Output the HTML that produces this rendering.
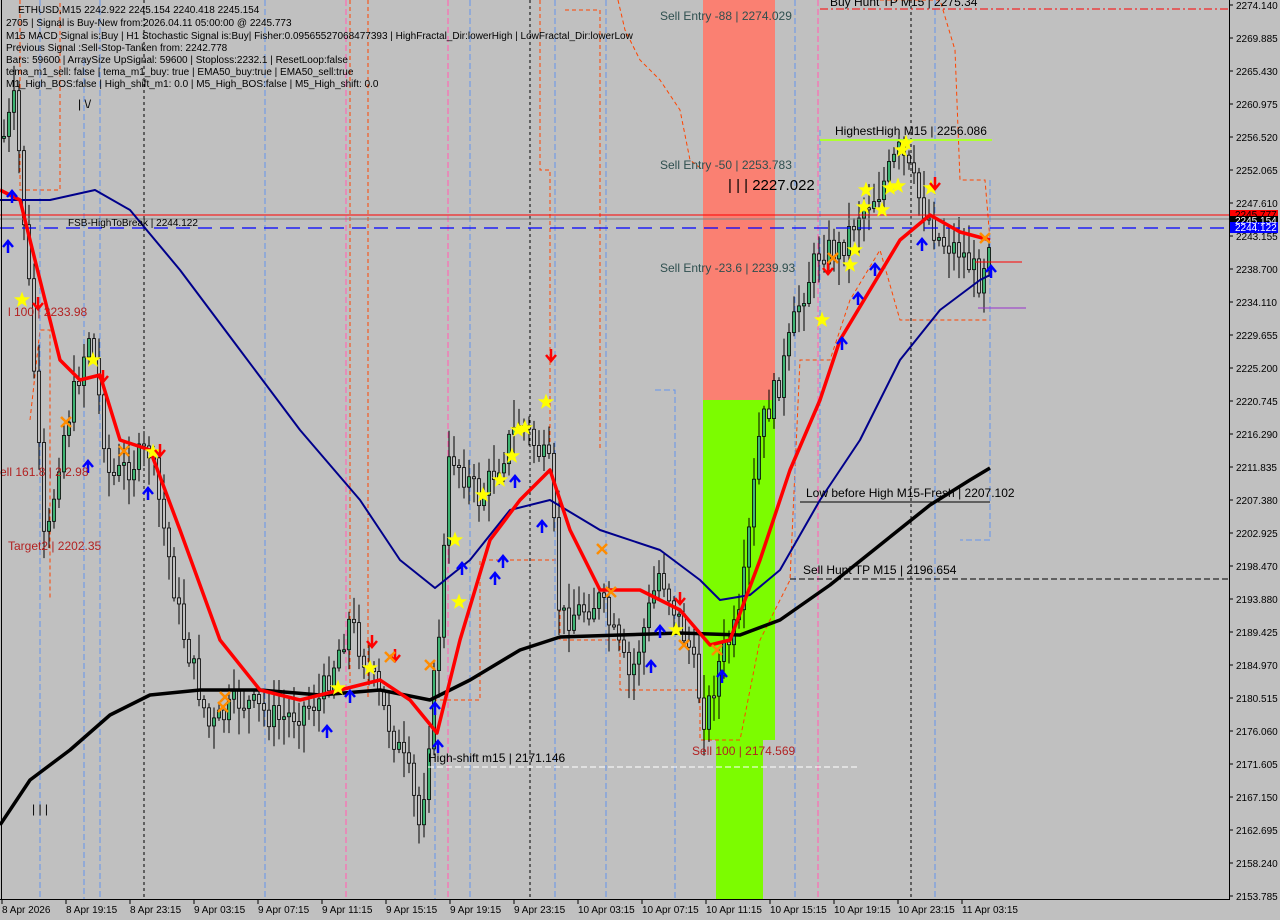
<!DOCTYPE html>
<html><head><meta charset="utf-8"><style>
html,body{margin:0;padding:0;background:#c0c0c0;width:1280px;height:920px;overflow:hidden}
svg{display:block;font-family:"Liberation Sans",Tahoma,sans-serif}
</style></head><body>
<svg id="s" width="1280" height="920" viewBox="0 0 1280 920" xmlns="http://www.w3.org/2000/svg">
<rect width="1280" height="920" fill="#c0c0c0"/>
<rect x="703" y="0" width="72" height="400" fill="#fa8072"/>
<rect x="703" y="400" width="72" height="340" fill="#7cfc00"/>
<rect x="716" y="740" width="47" height="160" fill="#7cfc00"/>
<g id="orange" fill="none" stroke="#ff4500" stroke-width="1" stroke-dasharray="4,3">
<polyline points="618,0 625,30 640,60 660,80 680,110 690,160 703,170"/>
<polyline points="350,0 350,700"/><polyline points="368,0 368,700"/>
<polyline points="20,0 20,190 60,190 60,0"/>
<polyline points="540,0 540,170 550,170 550,450"/>
<polyline points="565,10 600,10 600,450"/>
<polyline points="880,0 940,0 955,50 960,180 985,180 990,240"/>
<polyline points="433,700 480,700 480,560 560,560 560,640 620,640 620,690 700,690 700,740 740,740 760,640 790,580 800,360 830,360 850,300 880,250 900,320 990,320"/>
<polyline points="30,420 40,330 50,330 50,600"/>
</g>
<g fill="none" stroke="#6495ed" stroke-width="1" stroke-dasharray="6,3">
<polyline points="100,0 100,900"/><polyline points="40,0 40,900"/><polyline points="84,60 84,900"/>
<polyline points="470,0 470,900"/><polyline points="655,390 675,390 675,900"/>
<polyline points="795,0 795,900"/><polyline points="820,130 820,480"/>
<polyline points="935,0 935,900"/><polyline points="990,180 990,540 960,540"/>
<polyline points="606,0 606,900"/><polyline points="555,0 555,900"/>
<polyline points="435,700 435,900"/><polyline points="265,0 265,900"/>
</g>
<g stroke="#ff69b4" stroke-width="1.2" stroke-dasharray="6,3"><line x1="346" y1="0" x2="346" y2="900"/><line x1="448" y1="0" x2="448" y2="900"/><line x1="818" y1="0" x2="818" y2="900"/></g>
<g stroke="#000" stroke-width="1" stroke-dasharray="3,3"><line x1="144" y1="0" x2="144" y2="900"/><line x1="911" y1="0" x2="911" y2="900"/><line x1="530" y1="0" x2="530" y2="900"/></g>
<g id="candles"></g>
<line x1="0" y1="215" x2="1229" y2="215" stroke="#ff0000" stroke-width="1"/>
<line x1="0" y1="219" x2="1229" y2="219" stroke="#808080" stroke-width="1"/>
<line x1="0" y1="228" x2="1229" y2="228" stroke="#0000ff" stroke-width="1.2" stroke-dasharray="14,8"/>
<line x1="820" y1="9" x2="1229" y2="9" stroke="#ff0000" stroke-dasharray="8,3,2,3"/>
<line x1="820" y1="140" x2="992" y2="140" stroke="#adff2f" stroke-width="2"/>
<line x1="800" y1="502" x2="990" y2="502" stroke="#000"/>
<line x1="790" y1="579" x2="1229" y2="579" stroke="#000" stroke-dasharray="6,3"/>
<line x1="428" y1="767" x2="860" y2="767" stroke="#fff" stroke-dasharray="6,3"/>
<line x1="975" y1="262" x2="1022" y2="262" stroke="#ff0000"/>
<line x1="978" y1="308" x2="1026" y2="308" stroke="#9932cc"/>
<polyline fill="none" stroke="#000" stroke-width="3.5" stroke-linejoin="round" points="0,825 30,780 70,750 110,715 150,695 200,690 260,690 320,695 380,690 430,700 470,680 520,650 560,637 620,635 680,633 740,635 780,620 830,585 880,545 930,505 970,480 990,468"/>
<polyline fill="none" stroke="#00008b" stroke-width="2" stroke-linejoin="round" points="0,200 50,200 95,190 130,210 180,270 240,350 300,430 360,500 400,560 435,588 470,560 510,510 550,500 600,530 660,550 700,580 720,600 750,595 780,570 820,500 860,440 900,360 940,310 980,280 990,275"/>
<polyline fill="none" stroke="#ff0000" stroke-width="3.5" stroke-linejoin="round" points="0,190 20,200 40,280 60,360 80,380 100,375 120,440 150,450 180,530 220,640 260,690 300,700 340,690 380,680 410,700 437,733 460,640 490,540 520,500 550,470 570,530 600,590 640,590 680,610 710,645 730,640 760,560 790,470 820,400 840,340 870,290 900,240 930,215 960,232 990,240"/>
<g id="marks"></g>
<g font-size="10" fill="#000">
<text x="18" y="13">ETHUSD,M15  2242.922 2245.154 2240.418 2245.154</text>
<text x="6" y="26">2705 | Signal is Buy-New from:2026.04.11 05:00:00 @ 2245.773</text>
<text x="6" y="39">M15 MACD Signal is:Buy | H1 Stochastic Signal is:Buy| Fisher:0.09565527068477393 | HighFractal_Dir:lowerHigh | LowFractal_Dir:lowerLow</text>
<text x="6" y="51">Previous Signal :Sell-Stop-Tanken from: 2242.778</text>
<text x="6" y="63">Bars: 59600 | ArraySize UpSignal: 59600 | Stoploss:2232.1 | ResetLoop:false</text>
<text x="6" y="75">tema_m1_sell: false | tema_m1_buy: true | EMA50_buy:true | EMA50_sell:true</text>
<text x="6" y="87">M1_High_BOS:false | High_shift_m1: 0.0 | M5_High_BOS:false | M5_High_shift: 0.0</text>
<text x="68" y="226">FSB-HighToBreak | 2244.122</text>
</g>
<g font-size="12" fill="#2f4f4f">
<text x="660" y="20">Sell Entry -88 | 2274.029</text>
<text x="660" y="169">Sell Entry -50 | 2253.783</text>
<text x="660" y="272">Sell Entry -23.6 | 2239.93</text>
</g>
<g font-size="12" fill="#000">
<text x="835" y="135">HighestHigh   M15 | 2256.086</text>
<text x="806" y="497">Low before High   M15-Fresh | 2207.102</text>
<text x="803" y="574">Sell Hunt TP M15 | 2196.654</text>
<text x="428" y="762">High-shift m15 | 2171.146</text>
<text x="830" y="6">Buy Hunt TP M15 | 2275.34</text>
<text x="728" y="190" font-size="15">| | | 2227.022</text>
<text x="78" y="108">| \/</text>
<text x="32" y="813">| | |</text>
</g>
<g font-size="12" fill="#b22222">
<text x="692" y="755">Sell 100 | 2174.569</text>
<text x="8" y="316">l 100 | 2233.98</text>
<text x="0" y="476">ell 161.8 | 2 2.98</text>
<text x="8" y="550">Target2 | 2202.35</text>
</g>
<rect x="1229" y="0" width="51" height="920" fill="#c0c0c0"/>
<rect x="0" y="900" width="1280" height="20" fill="#c0c0c0"/>
<line x1="1229.5" y1="0" x2="1229.5" y2="900" stroke="#000"/>
<line x1="0" y1="899.5" x2="1230" y2="899.5" stroke="#000"/>
<line x1="1.5" y1="0" x2="1.5" y2="900" stroke="#000"/>
<g id="axis" font-size="10" fill="#000"></g>
<rect x="1230" y="210" width="48" height="9" fill="#ff0000"/>
<rect x="1230" y="216" width="48" height="7" fill="#000"/>
<rect x="1230" y="222" width="48" height="11" fill="#0000ff"/>
<text x="1235" y="218" font-size="10" fill="#000">2245.777</text>
<text x="1235" y="224" font-size="10" fill="#fff">2245.154</text>
<text x="1235" y="231" font-size="10" fill="#fff">2244.122</text>
</svg>
<script>
(function(){
var NS="http://www.w3.org/2000/svg";
function el(t,a,p){var e=document.createElementNS(NS,t);for(var k in a)e.setAttribute(k,a[k]);document.getElementById(p).appendChild(e);return e;}
var labels=[2274.140,2269.885,2265.430,2260.975,2256.520,2252.065,2247.610,2243.155,2238.700,2234.110,2229.655,2225.200,2220.745,2216.290,2211.835,2207.380,2202.925,2198.470,2193.880,2189.425,2184.970,2180.515,2176.060,2171.605,2167.150,2162.695,2158.240,2153.785];
labels.forEach(function(v,i){var y=5+i*(891/27);
el("line",{x1:1229,y1:y,x2:1233,y2:y,stroke:"#000"},"axis");
var t=el("text",{x:1236,y:y+4},"axis");t.textContent=v.toFixed(3);});
var times=["8 Apr 2026","8 Apr 19:15","8 Apr 23:15","9 Apr 03:15","9 Apr 07:15","9 Apr 11:15","9 Apr 15:15","9 Apr 19:15","9 Apr 23:15","10 Apr 03:15","10 Apr 07:15","10 Apr 11:15","10 Apr 15:15","10 Apr 19:15","10 Apr 23:15","11 Apr 03:15"];
times.forEach(function(s,i){var x=2+i*64;el("line",{x1:x,y1:899,x2:x,y2:904,stroke:"#000"},"axis");var t=el("text",{x:x,y:913},"axis");t.textContent=s;});
var P=[[0,150],[15,100],[30,300],[45,560],[60,450],[90,330],[110,480],[150,450],[180,620],[210,730],[240,700],[280,720],[320,700],[350,620],[380,700],[410,780],[420,830],[440,620],[450,450],[480,500],[520,420],[550,470],[560,620],[600,600],[630,680],[660,570],[690,650],[705,720],[720,660],[740,620],[760,430],[780,380],[800,300],[820,250],[840,250],[860,210],[880,190],[900,150],[920,200],[940,240],[960,250],[980,280],[990,230]];
function f(x){for(var i=1;i<P.length;i++){if(x<=P[i][0]){var a=P[i-1],b=P[i];return a[1]+(b[1]-a[1])*(x-a[0])/(b[0]-a[0]);}}return 230;}
var seed=7;function r(){seed=(seed*9301+49297)%233280;return seed/233280;}
var prev=f(4);
for(var x=4;x<=990;x+=5){var c=f(x)+(r()-0.5)*30;var o=prev;var hi=Math.min(o,c)-r()*25-3,lo=Math.max(o,c)+r()*25+3;
el("line",{x1:x,y1:hi,x2:x,y2:lo,stroke:"#000","stroke-width":1},"candles");
var ty=Math.min(o,c),h=Math.max(2,Math.abs(o-c));
el("rect",{x:x-1.5,y:ty,width:3,height:h,fill:c<o?"#3cb371":"#c0c0c0",stroke:"#000","stroke-width":0.8},"candles");prev=c;}
var stars=[[22,300],[93,360],[153,452],[338,688],[370,668],[455,540],[459,602],[483,495],[500,480],[512,456],[518,430],[525,428],[546,402],[676,630],[822,320],[850,265],[855,250],[864,207],[866,190],[882,210],[890,188],[898,186],[902,150],[906,143],[931,188]];
stars.forEach(function(s){var pts=[];for(var k=0;k<10;k++){var rad=k%2?3.5:8.5,an=-Math.PI/2+k*Math.PI/5;pts.push((s[0]+rad*Math.cos(an)).toFixed(1)+","+(s[1]+rad*Math.sin(an)).toFixed(1));}el("polygon",{points:pts.join(" "),fill:"#ffff00"},"marks");});
var up=[[8,245],[12,195],[88,465],[148,492],[327,730],[350,695],[435,707],[438,745],[462,567],[495,577],[503,560],[515,480],[542,525],[651,665],[660,630],[722,675],[842,342],[858,297],[875,268],[922,243],[991,270]];
up.forEach(function(a){el("path",{d:"M"+a[0]+","+(a[1]+8)+" V"+(a[1]-3)+" M"+(a[0]-5)+","+(a[1]+2)+" L"+a[0]+","+(a[1]-4)+" L"+(a[0]+5)+","+(a[1]+2),stroke:"#0000ff","stroke-width":2.5,fill:"none"},"marks");});
var dn=[[38,305],[103,378],[160,452],[372,643],[395,657],[551,357],[680,600],[828,270],[935,185]];
dn.forEach(function(a){el("path",{d:"M"+a[0]+","+(a[1]-8)+" V"+(a[1]+3)+" M"+(a[0]-5)+","+(a[1]-2)+" L"+a[0]+","+(a[1]+4)+" L"+(a[0]+5)+","+(a[1]-2),stroke:"#ff0000","stroke-width":2.5,fill:"none"},"marks");});
var xs=[[66,422],[124,451],[225,697],[223,707],[390,657],[430,665],[602,549],[611,592],[684,645],[717,650],[833,258],[985,238]];
xs.forEach(function(a){el("path",{d:"M"+(a[0]-5)+","+(a[1]-5)+" L"+(a[0]+5)+","+(a[1]+5)+" M"+(a[0]+5)+","+(a[1]-5)+" L"+(a[0]-5)+","+(a[1]+5),stroke:"#ff8c00","stroke-width":2.5},"marks");});
})();
</script>
</body></html>
